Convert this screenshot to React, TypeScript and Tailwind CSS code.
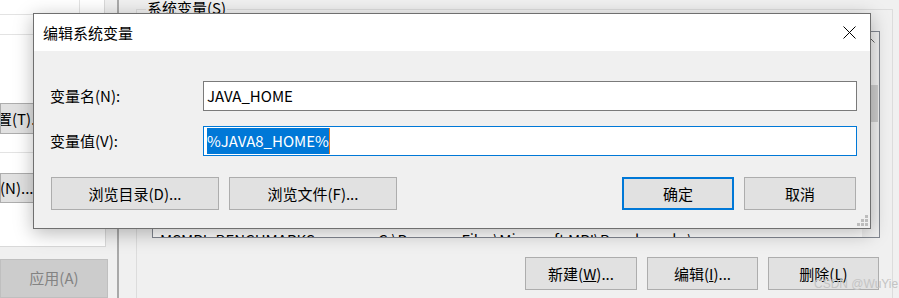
import React from "react";

function WinButton({
  children,
  className = "",
}: {
  children: React.ReactNode;
  className?: string;
}) {
  return (
    <div
      className={`flex items-center justify-center bg-[#e1e1e1] border border-[#adadad] text-[15px] text-black whitespace-nowrap ${className}`}
    >
      {children}
    </div>
  );
}

function CloseIcon() {
  return (
    <svg width="13" height="13" viewBox="0 0 13 13" className="block">
      <path d="M0.5 0.5 L12.5 12.5 M12.5 0.5 L0.5 12.5" stroke="#000" strokeWidth="1" fill="none" />
    </svg>
  );
}

function ResizeGrip() {
  const dots = [
    [8, 0],
    [4, 4],
    [8, 4],
    [0, 8],
    [4, 8],
    [8, 8],
  ];
  return (
    <svg width="11" height="11" viewBox="0 0 11 11" className="block">
      {dots.map(([x, y]) => (
        <rect key={`${x}-${y}`} x={x} y={y} width="3" height="3" fill="#bdbdbd" />
      ))}
    </svg>
  );
}

export default function EditVariableDialog() {
  return (
    <div className="relative w-[899px] h-[298px] overflow-hidden bg-[#f0f0f0] font-['Noto_Sans_CJK_SC',sans-serif] text-[15px] leading-[20px] text-black">
      {/* window behind the dialog */}
      <div className="flex h-full">
        {/* left column: user variables part */}
        <div className="w-[117px] flex flex-col shrink-0">
          <div className="h-[106px] w-[105px] bg-white border-r border-[#d9d9d9] flex flex-col">
            <div className="h-[15px] border-b border-[#e3e3e3] flex">
              <div className="w-[80px] border-r border-[#e3e3e3]" />
            </div>
            <div className="h-[20px] border-b border-[#e3e3e3]" />
          </div>
          <WinButton className="h-[31px] w-[105px] !justify-start overflow-hidden">
            <span className="ml-[-4px]">置(T)...</span>
          </WinButton>
          <div className="h-[40px] w-[105px] bg-white flex flex-col">
            <div className="h-[19px] border-b border-[#e3e3e3]" />
          </div>
          <WinButton className="h-[31px] w-[105px] !justify-start overflow-hidden">
            <span className="ml-[-1px]">(N)...</span>
          </WinButton>
          <div className="h-[45px] w-[106px] bg-white border-r border-b border-[#d9d9d9]" />
          <div className="mt-[12px] h-[40px] w-[108px] bg-[#cccccc] border border-[#bfbfbf] flex items-center justify-center text-[#838383]">
            应用(A)
          </div>
        </div>

        <div className="w-[2px] bg-[#a9a9a9] shrink-0" />
        <div className="w-[17px] shrink-0" />

        {/* system variables group */}
        <div className="relative mt-[9px] w-[757px] h-[300px] border-l border-t border-r border-[#dcdcdc] pl-[15px] pr-[12px] pt-[21px] shrink-0">
          <span className="absolute left-[9px] top-[-12px] px-[1px] bg-[#f0f0f0] leading-[20px]">
            系统变量(S)
          </span>

          <div className="h-[207px] border border-[#828790] bg-white flex overflow-hidden">
            <div className="flex-1 flex flex-col justify-end overflow-hidden">
              <div className="flex mb-[-13px] pl-[7px] h-[20px] whitespace-nowrap">
                <span className="w-[218px]">MSMPI_BENCHMARKS</span>
                <span>C:\Program Files\Microsoft MPI\Benchmarks\</span>
              </div>
            </div>
            <div className="w-[17px] bg-[#f0f0f0] flex flex-col">
              <div className="h-[17px] flex items-center justify-center">
                <svg width="9" height="5" viewBox="0 0 9 5">
                  <path d="M0.5 4.5 L4.5 0.5 L8.5 4.5" stroke="#606060" fill="none" />
                </svg>
              </div>
              <div className="mt-[36px] mx-[1px] h-[37px] bg-[#cdcdcd]" />
            </div>
          </div>

          <div className="mt-[19px] flex justify-end gap-[10px] pr-[1px]">
            <WinButton className="h-[33px] w-[112px]">
              新建(<span className="underline">W</span>)...
            </WinButton>
            <WinButton className="h-[33px] w-[111px]">
              编辑(<span className="underline">I</span>)...
            </WinButton>
            <WinButton className="h-[33px] w-[111px]">
              删除(<span className="underline">L</span>)
            </WinButton>
          </div>
        </div>
      </div>

      {/* edit dialog */}
      <div className="absolute left-[33px] top-[13px] w-[838px] h-[216px] border border-[#6f6f6f] bg-[#f0f0f0] shadow-[0_4px_18px_rgba(0,0,0,0.28)] flex flex-col">
        <div className="h-[37px] bg-white flex items-center justify-between pl-[9px] pr-[14px]">
          <span>编辑系统变量</span>
          <CloseIcon />
        </div>

        <div className="relative flex-1 flex flex-col pl-[16px] pr-[13px] pt-[30px]">
          <div className="flex items-center">
            <label className="w-[153px]">变量名(N):</label>
            <div className="flex-1 h-[30px] bg-white border border-[#7a7a7a] flex items-center pl-[3px]">
              JAVA_HOME
            </div>
          </div>

          <div className="mt-[15px] flex items-center">
            <label className="w-[153px]">变量值(V):</label>
            <div className="flex-1 h-[30px] bg-white border border-[#0078d7] flex items-center pl-[3px]">
              <span className="bg-[#0078d7] text-white h-[26px] flex items-center">%JAVA8_HOME%</span>
              <span className="w-[1px] h-[26px] bg-[#e87a1f]" />
            </div>
          </div>

          <div className="mt-[21px] flex items-center pl-[1px] pr-[1px]">
            <WinButton className="h-[33px] w-[168px]">浏览目录(D)...</WinButton>
            <WinButton className="ml-[10px] h-[33px] w-[168px]">浏览文件(F)...</WinButton>
            <div className="flex-1" />
            <WinButton className="h-[33px] w-[112px] !border-2 !border-[#0078d7]">确定</WinButton>
            <WinButton className="ml-[10px] h-[33px] w-[112px]">取消</WinButton>
          </div>

          <div className="absolute right-[2px] bottom-[2px]">
            <ResizeGrip />
          </div>
        </div>
      </div>

      {/* watermark */}
      <span className="absolute left-[814px] top-[277px] text-[12px] leading-[14px] text-[#c4c4c4] font-['Liberation_Sans',sans-serif]">
        CSDN @WuYie
      </span>
    </div>
  );
}
